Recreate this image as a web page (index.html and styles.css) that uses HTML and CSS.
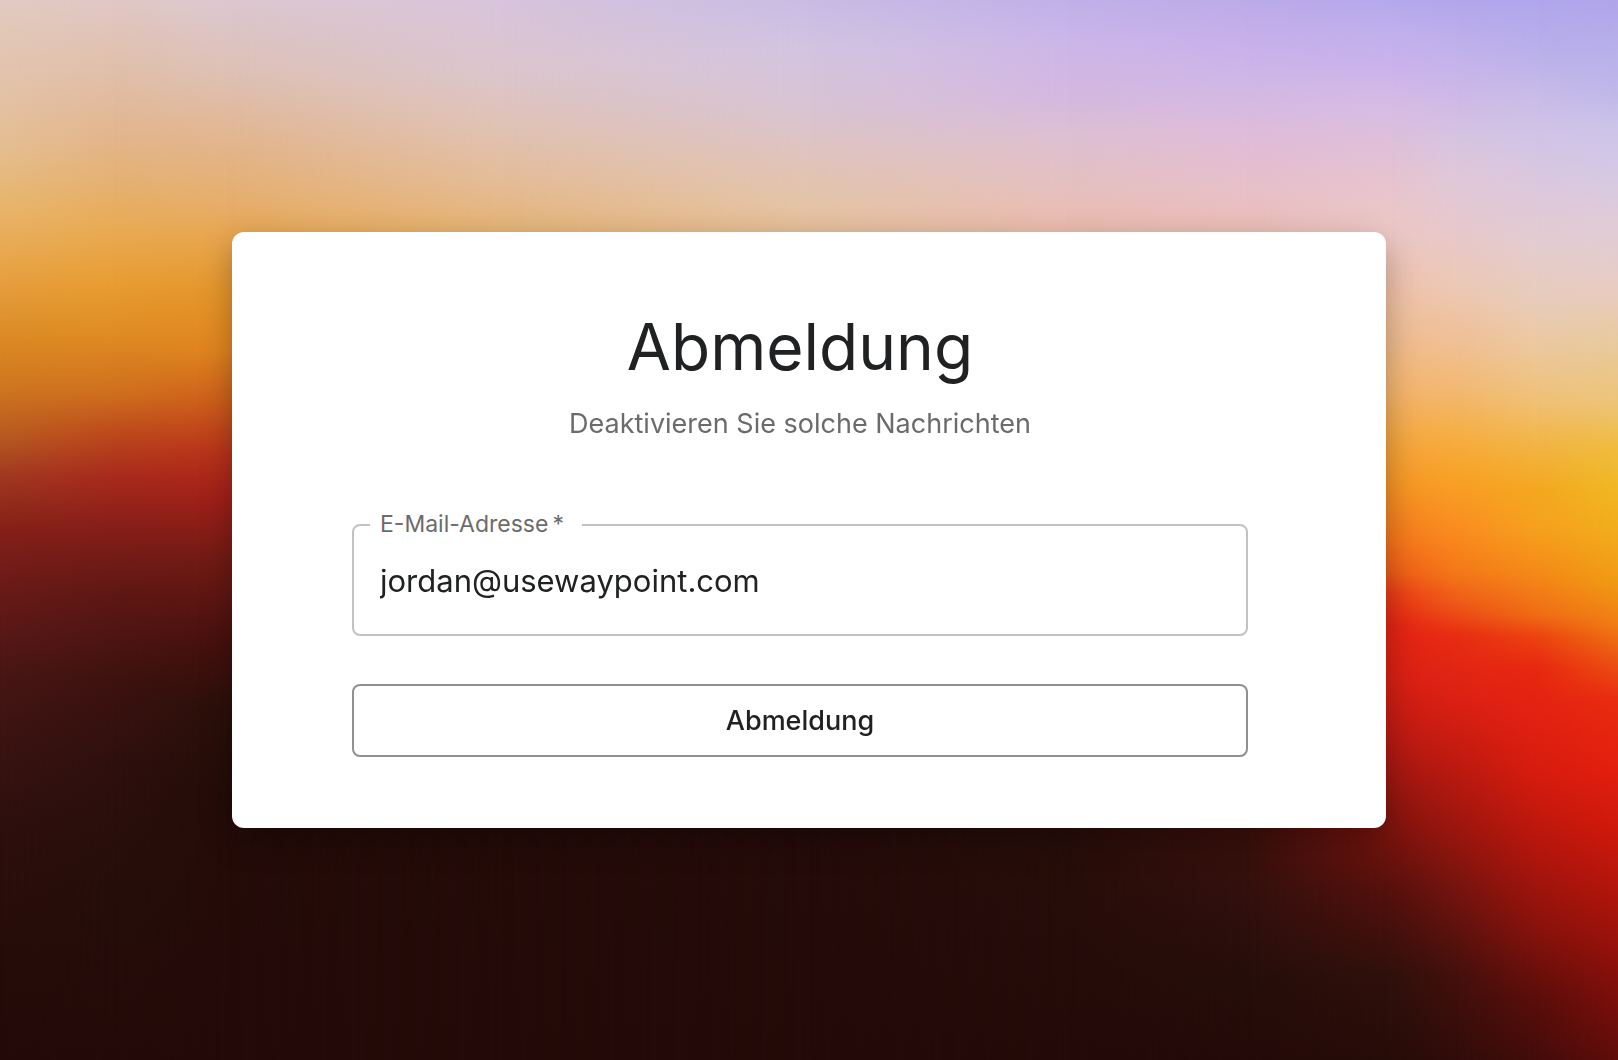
FILE: index.html
```html
<!DOCTYPE html>
<html lang="de">
<head>
<meta charset="utf-8">
<meta name="viewport" content="width=device-width, initial-scale=1">
<title>Abmeldung</title>
<link rel="stylesheet" href="styles.css">
</head>
<body>
<div class="backdrop" aria-hidden="true">
  <div class="band band-1"></div>
  <div class="band band-2"></div>
  <div class="band band-3"></div>
  <div class="band band-4"></div>
  <div class="band band-5"></div>
  <div class="band band-6"></div>
  <div class="band band-7"></div>
  <div class="band band-8"></div>
  <div class="band band-9"></div>
  <div class="band band-10"></div>
  <div class="band band-11"></div>
</div>
<main class="card">
  <header class="intro">
    <h1 class="title">Abmeldung</h1>
    <p class="subtitle">Deaktivieren Sie solche Nachrichten</p>
  </header>
  <form class="form">
    <div class="field">
      <label class="field-label" for="email">E-Mail-Adresse<span class="required">*</span></label>
      <input class="field-input" id="email" type="email" value="jordan@usewaypoint.com" required>
    </div>
    <button class="button" type="submit">Abmeldung</button>
  </form>
</main>
</body>
</html>
```

FILE: styles.css
```css
*,
*::before,
*::after {
  box-sizing: border-box;
}

body {
  margin: 0;
  min-height: 100vh;
  padding: 48px 232px;
  display: flex;
  align-items: center;
  font-family: Inter, "Liberation Sans", sans-serif;
  color: #202122;
  background: #240a08;
}

/* Sunset backdrop: vertical gradients that fade into each other from left to right */
.backdrop {
  position: fixed;
  inset: 0;
  z-index: -1;
  display: grid;
}

.band {
  grid-area: 1 / 1;
  mask-image: linear-gradient(to right, transparent var(--from), #000 var(--to));
}

.band-1 {
  mask-image: none;
  background: linear-gradient(#e2cac2, #e3c4ac 7%, #e5be90 14%, #e8b468 20%, #e8a548 25%, #dc8a24 32%, #cc7420 37%, #b85c20 41%, #a03820 45%, #842018 50%, #681a18 56%, #461614 64%, #2e100e 77%, #260c08 90%, #240a08);
}

.band-2 {
  --from: 0%;
  --to: 7%;
  background: linear-gradient(#e0c8c4, #e0c0ac 6%, #e2b896 11%, #e4b27a 16%, #e8ac58 21%, #e89c30 27%, #e08e24 31%, #d0701e 37%, #bc481c 41%, #a82a1c 45%, #841e18 50%, #5e1814 56%, #3e1210 64%, #2e100e 72%, #260e0a 84%, #240a08);
}

.band-3 {
  --from: 7%;
  --to: 14%;
  background: linear-gradient(#dcc8d0, #dec0b4 7%, #e2b690 13%, #e6ae6c 19%, #e8a44a 23%, #e49428 28%, #e08420 33%, #cc5c1a 38%, #b8301a 43%, #a02018 47%, #701a14 53%, #44100e 61%, #2a100a 67%, #240c08 75%, #240a08);
}

.band-4 {
  --from: 14%;
  --to: 31%;
  background: linear-gradient(#d8c4dc, #dcc6cc 7%, #e0c2b4 12%, #e4bc98 17%, #e4b474 22%, #240c08 75%, #240a08);
}

.band-5 {
  --from: 31%;
  --to: 50%;
  background: linear-gradient(#c8bce4, #d4c4e0 5%, #d8c4d4 10%, #e0c4bc 15%, #e4c4a8 19%, #e6be98 22%, #240c0a 77%, #240a08);
}

.band-6 {
  --from: 50%;
  --to: 66%;
  background: linear-gradient(#c0b0e8, #ccb6e8 4%, #d4b8e0 9%, #dec0d2 13%, #e6c0be 18%, #ebbaac 22%, #280e0a 78%, #240a08);
}

.band-7 {
  --from: 66%;
  --to: 77%;
  background: linear-gradient(#bcaae8, #c8b0ea 4%, #d0b8e6 8%, #e0bcd8 13%, #e8c0c8 18%, #ebbcb4 22%, #3c100c 78%, #30100e 85%, #260e0a 92%, #240a08);
}

.band-8 {
  --from: 77%;
  --to: 86%;
  background: linear-gradient(#b4a8ec, #c0b0ec 3%, #cab2ec 6%, #d6bce4 10%, #e0c0d8 14%, #e8c4cc 18%, #ecc8c4 22%, #efc2ac 27%, #f0bc90 32%, #f4b46c 37%, #f4a43c 42%, #f49424 46%, #f4741c 51%, #ee5c18 54%, #ea3c16 56%, #e42414 59%, #d82014 64%, #b81a12 70%, #941610 75%, #80140e 78%, #56100c 84%, #30100c 92%, #260c08);
}

.band-9 {
  --from: 86%;
  --to: 90%;
  background: linear-gradient(#b2a6ec, #c2b2ea 5%, #ceb8e8 9%, #d6c4e0 13%, #e0c8d8 17%, #e8c8cc 22%, #ecc8b4 27%, #f0c096 32%, #f2b870 37%, #f6ae44 41%, #f8a226 45%, #fa8c20 50%, #f47818 54%, #ee5818 57%, #e82c12 60%, #dc2014 66%, #be1a10 72%, #9c160e 78%, #74140e 84%, #44100c 92%, #300c0a);
}

.band-10 {
  --from: 90%;
  --to: 95%;
  background: linear-gradient(#b0a6ec, #bab0ea 5%, #c8bce8 9%, #d2c4e6 13%, #dcc8dc 18%, #e4ccd0 23%, #e8ccbc 28%, #ecc89c 33%, #f0c074 38%, #f2b444 42%, #f4a820 46%, #f6a01e 50%, #f48a18 54%, #f06c14 58%, #ec4410 60%, #e82810 63%, #e42212 67%, #d61c0e 73%, #b4160c 80%, #86120c 88%, #5c0e0a 94%, #440c0a);
}

.band-11 {
  --from: 95%;
  --to: 100%;
  background: linear-gradient(#b0a4ea, #b8b0ea 5%, #c0b8e8 9%, #ccc4ea 12%, #d4c8e4 16%, #e0ccd8 21%, #e8ccc4 27%, #e8caa0 32%, #ecc478 38%, #efbc40 42%, #f0b822 46%, #f2ac1c 50%, #f09a14 55%, #f07c14 59%, #ec5812 62%, #e82c10 66%, #e4200e 72%, #cc180c 79%, #a8140a 86%, #820f0a 93%, #600c0a);
}

.card {
  flex: 1;
  padding: 75px 138px 71px 120px;
  border-radius: 12px;
  background: #fff;
  box-shadow: 0 12px 32px rgba(0, 0, 0, 0.28);
}

.intro {
  margin-bottom: 80px;
  text-align: center;
}

.title {
  margin: 0 0 17px;
  font-size: 64px;
  font-weight: 400;
  line-height: 80px;
}

.subtitle {
  margin: 0;
  font-size: 27px;
  line-height: 40px;
  color: #6b6b6b;
}

.form {
  display: flex;
  flex-direction: column;
  gap: 48px;
}

.field {
  position: relative;
}

/* The label sits on the top border of the field */
.field-label {
  position: absolute;
  top: -16px;
  left: 18px;
  padding: 0 18px 0 10px;
  font-size: 23px;
  line-height: 32px;
  color: #6b6b6b;
  background: #fff;
}

.required {
  margin-left: 4px;
}

.field-input {
  display: block;
  width: 100%;
  height: 112px;
  padding: 0 26px;
  border: 2px solid #c2c2c2;
  border-radius: 8px;
  font: inherit;
  font-size: 31px;
  color: inherit;
  background: #fff;
}

.button {
  height: 73px;
  border: 2px solid #909090;
  border-radius: 8px;
  font: inherit;
  font-size: 27px;
  font-weight: 500;
  color: inherit;
  background: #fff;
}
```
